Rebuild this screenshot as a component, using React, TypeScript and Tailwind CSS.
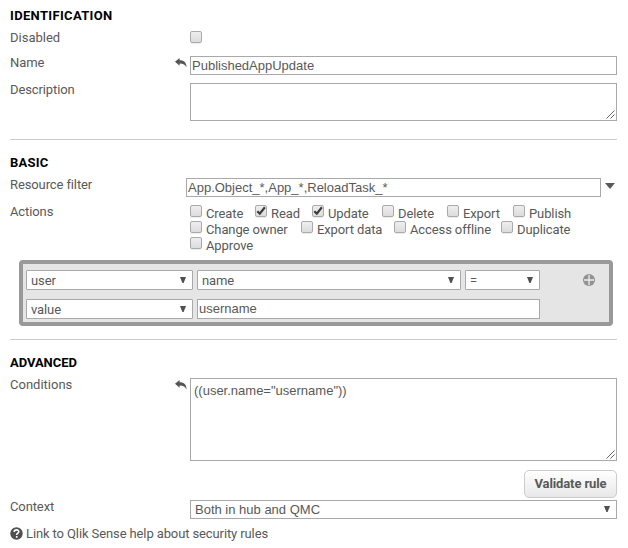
import type { ReactNode } from "react";

const arial = "font-['Liberation_Sans',Arial,sans-serif] text-[13px] leading-[17px] tracking-normal";

function Heading({ children, className = "" }: { children: ReactNode; className?: string }) {
  return <h2 className={`h-[22px] text-[13px] leading-[22px] font-bold text-black whitespace-nowrap ${className}`}>{children}</h2>;
}

function Label({ children, className = "" }: { children: ReactNode; className?: string }) {
  return <div className={`w-[164px] shrink-0 leading-4 whitespace-nowrap ${className}`}>{children}</div>;
}

function Undo({ className = "" }: { className?: string }) {
  return (
    <svg className={`mr-[3px] ml-px shrink-0 ${className}`} width="12" height="10" viewBox="0 0 12 10" fill="#555">
      <path d="M0 3.8L4.6 0v2.3c4.6 0 6.8 2.4 7 7.2-1.2-2.7-3.2-3.8-7-3.9v2.2z" />
    </svg>
  );
}

function Box({ checked = false }: { checked?: boolean }) {
  return (
    <span className="block size-3 shrink-0 rounded-[2px] border border-[#aaa] bg-linear-to-b from-[#eee] to-[#dcdcdc] shadow-[0_1px_1px_rgba(0,0,0,0.08)]">
      {checked && (
        <svg className="block" width="10" height="10" viewBox="0 0 10 10" fill="none" stroke="#3c3c3c" strokeWidth="2.2">
          <path d="M1.3 5.2L3.8 7.6L8.9 1.3" />
        </svg>
      )}
    </span>
  );
}

function Check({ text, checked, width }: { text: string; checked?: boolean; width: string }) {
  return (
    <label className={`flex h-4 shrink-0 ${width}`}>
      <Box checked={checked} />
      <span className="mt-px ml-1 leading-4 whitespace-nowrap">{text}</span>
    </label>
  );
}

function Arrow() {
  return (
    <svg className="shrink-0" width="6" height="6" viewBox="0 0 6 6" fill="#505050">
      <path d="M0 0h6L3.6 6H2.4z" />
    </svg>
  );
}

function Select({ children, className = "" }: { children: ReactNode; className?: string }) {
  return (
    <div className={`flex h-5 shrink-0 justify-between rounded-[1px] border border-[#a9a9a9] bg-white pt-[6px] pr-[6px] pl-1 ${className}`}>
      <span className="-mt-[4px] leading-4">{children}</span>
      <Arrow />
    </div>
  );
}

function Grip() {
  return (
    <svg className="self-end" width="9" height="9" viewBox="0 0 9 9" stroke="#555" strokeWidth="0.9">
      <path d="M0.5 8.5L8.5 0.5M4.5 8.5L8.5 4.5" />
    </svg>
  );
}

export default function App() {
  return (
    <main className="h-[548px] w-[628px] overflow-hidden bg-white pl-[10px] font-[Roboto,sans-serif] text-[13px] tracking-[-0.11px] text-[#595959]">
      <section className="h-[140px] w-[607px] border-b border-[#ccc] pt-[5px]">
        <Heading className="tracking-[0.34px]">IDENTIFICATION</Heading>
        <div className="flex h-[25px] pt-[3px]">
          <Label className="tracking-normal">Disabled</Label>
          <div className="ml-4 pt-px"><Box /></div>
        </div>
        <div className="flex h-[27px] pt-1">
          <Label className="-mt-px">Name</Label>
          <Undo className="mt-[2px]" />
          <div className={`h-[19px] w-[427px] border border-[#a9a9a9] pl-px ${arial}`}>PublishedAppUpdate</div>
        </div>
        <div className="flex h-[42px] pt-1">
          <Label className="-mt-px">Description</Label>
          <div className="ml-4 flex h-[38px] w-[427px] justify-end border border-[#a9a9a9] pr-px pb-px"><Grip /></div>
        </div>
      </section>

      <section className="h-[200px] w-[607px] border-b border-[#ccc] pt-3">
        <Heading className="tracking-[0.2px]">BASIC</Heading>
        <div className="flex h-[31px] pt-1">
          <Label className="-mt-px">Resource filter</Label>
          <div className={`ml-3 h-[19px] w-[415px] border border-[#a9a9a9] pl-px ${arial}`}>App.Object_*,App_*,ReloadTask_*</div>
          <svg className="mt-[5px] ml-1" width="10" height="6" viewBox="0 0 10 6" fill="#595959"><path d="M0 0h10L5 6z" /></svg>
        </div>
        <div className="flex h-[55px]">
          <Label className="-mt-px">Actions</Label>
          <div className="ml-4">
            <div className="flex">
              <Check text="Create" width="w-[65px]" />
              <Check text="Read" checked width="w-[57px]" />
              <Check text="Update" checked width="w-[70px]" />
              <Check text="Delete" width="w-[65px]" />
              <Check text="Export" width="w-[66px]" />
              <Check text="Publish" width="w-[70px]" />
            </div>
            <div className="flex">
              <Check text="Change owner" width="w-[111px]" />
              <Check text="Export data" width="w-[93px]" />
              <Check text="Access offline" width="w-[107px]" />
              <Check text="Duplicate" width="w-[80px]" />
            </div>
            <Check text="Approve" width="w-[80px]" />
          </div>
        </div>
        <div className="ml-[9px] h-[66px] w-[594px] rounded-[4px] border-4 border-[#999] bg-[#e5e5e5] pt-[6px] pl-[3px]">
          <div className="flex gap-1">
            <Select className="w-[167px]">user</Select>
            <Select className="w-[264px]">name</Select>
            <Select className="w-[75px]">=</Select>
            <svg className="mt-1 ml-[39px]" width="12" height="12" viewBox="0 0 12 12">
              <circle cx="6" cy="6" r="6" fill="#929294" />
              <path d="M6 1v10M1 6h10" stroke="#eee" strokeWidth="1.3" />
            </svg>
          </div>
          <div className="mt-[9px] flex gap-1">
            <Select className="w-[167px]">value</Select>
            <div className={`h-5 w-[343px] border border-[#a9a9a9] bg-white pl-px ${arial}`}>username</div>
          </div>
        </div>
      </section>

      <section className="w-[607px] pt-3">
        <Heading className="tracking-[-0.05px]">ADVANCED</Heading>
        <div className="flex h-[96px] pt-1">
          <Label className="-mt-px tracking-normal">Conditions</Label>
          <Undo className="mt-[2px]" />
          <div className={`flex h-[83px] w-[427px] justify-between border border-[#a9a9a9] pt-[3px] pr-px pb-px pl-[3px] ${arial}`}>
            <span>((user.name="username"))</span>
            <Grip />
          </div>
        </div>
        <div className="flex h-[30px] justify-end">
          <button className="h-7 w-[93px] rounded-[5px] border border-[#ccc] bg-linear-to-b from-white to-[#e8e8e8] pb-px font-bold whitespace-nowrap">Validate rule</button>
        </div>
        <div className="flex h-[27px]">
          <Label className="-mt-px">Context</Label>
          <div className={`ml-4 flex h-[19px] w-[427px] justify-between border border-[#a9a9a9] pr-[6px] pl-1 ${arial}`}>
            <span>Both in hub and QMC</span>
            <span className="pt-[5px]"><Arrow /></span>
          </div>
        </div>
        <div className="flex leading-4">
          <svg width="13" height="13" viewBox="0 0 13 13">
            <circle cx="6.5" cy="6.5" r="6.2" fill="#505050" />
            <path d="M4.2 5C4.2 2.2 8.8 2.2 8.8 4.8C8.8 6.2 6.7 6.2 6.7 7.9M6.7 9v1.7" fill="none" stroke="white" strokeWidth="1.6" />
          </svg>
          <span className="-mt-px ml-[3px] whitespace-nowrap">Link to Qlik Sense help about security rules</span>
        </div>
      </section>
    </main>
  );
}
